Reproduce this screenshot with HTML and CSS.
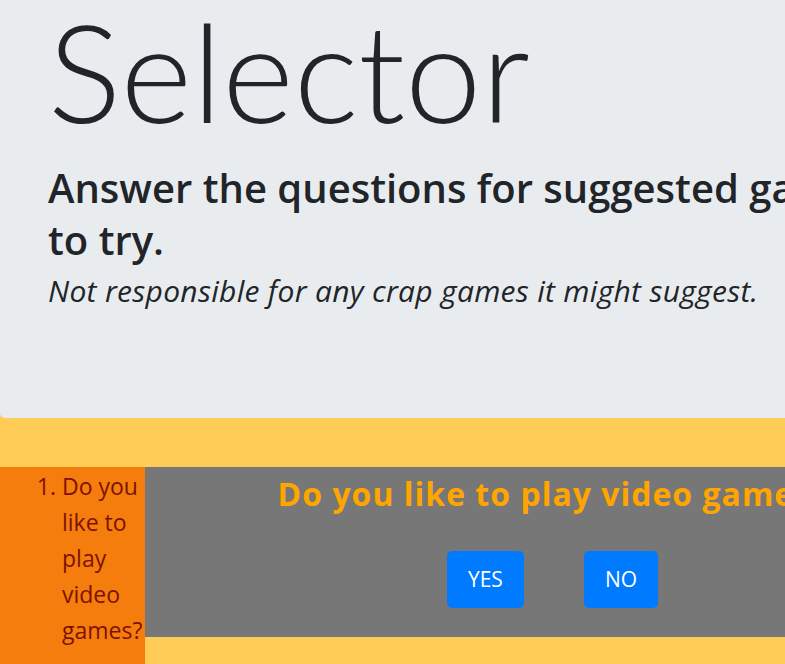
FILE: index.html
```html
<!DOCTYPE html>
<html lang="en">
<head>
<meta charset="utf-8">
<title>Selector</title>
<link rel="stylesheet" href="styles.css">
</head>
<body>
<div class="page">
  <header class="jumbotron">
    <h1 class="display">Selector</h1>
    <h2 class="intro">Answer the questions for suggested games to try.</h2>
    <p class="note">Not responsible for any crap games it might suggest.</p>
  </header>
  <main class="quiz">
    <aside class="sidebar">
      <ol class="steps">
        <li>Do you like to play video games?</li>
      </ol>
    </aside>
    <section class="question">
      <h3 class="question-title">Do you like to play video games?</h3>
      <div class="answers">
        <button class="btn">YES</button>
        <button class="btn">NO</button>
      </div>
    </section>
  </main>
</div>
</body>
</html>
```

FILE: styles.css
```css
html {
  overflow: hidden;
}
body {
  margin: 0;
  background: #ffcd57;
  font-family: "Open Sans", Lato, sans-serif;
  color: #212529;
}
.page {
  width: 960px;
}
.jumbotron {
  background: #e9ecef;
  border-radius: 0 0 5px 5px;
  padding: 10px 50px 110px 48px;
}
.display {
  margin: 0 0 32px;
  font-family: Lato, "Open Sans", sans-serif;
  font-size: 137px;
  font-weight: 300;
  line-height: 120px;
}
.intro {
  margin: 0 0 8px;
  font-size: 40px;
  font-weight: 600;
  line-height: 52px;
}
.note {
  margin: 0;
  font-size: 30px;
  font-style: italic;
  letter-spacing: 0.3px;
  line-height: 34px;
}
.quiz {
  display: flex;
  align-items: flex-start;
  margin-top: 49px;
}
.sidebar {
  flex: 0 0 145px;
  background: #f47d0d;
  color: #7e1200;
  padding: 1px 0 20px;
}
.steps {
  margin: 0;
  padding: 0 2px 0 62px;
  font-size: 23px;
  line-height: 36px;
}
.question {
  flex: 0 0 815px;
  background: #767776;
  padding: 8px 0 29px;
  text-align: center;
}
.question-title {
  margin: 0 0 38px;
  font-size: 32px;
  font-weight: 700;
  letter-spacing: 1px;
  line-height: 38px;
  color: #ffa500;
}
.answers {
  display: flex;
  justify-content: center;
  gap: 60px;
}
.btn {
  background: #007bff;
  color: #fff;
  border: 0;
  border-radius: 5px;
  font-family: inherit;
  font-size: 21px;
  line-height: 33px;
  padding: 12px 21px;
}
```
